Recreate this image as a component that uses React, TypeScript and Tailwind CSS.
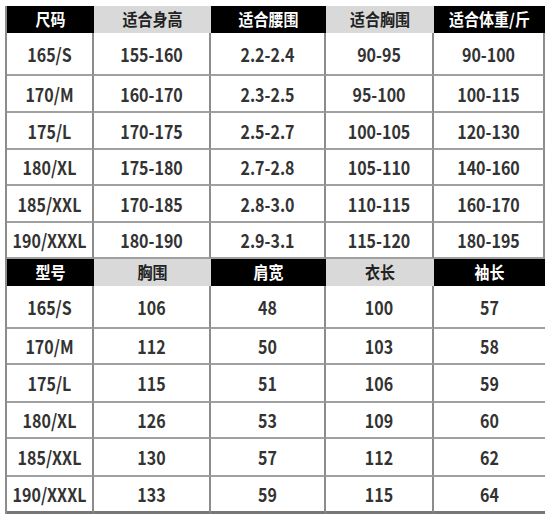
import React from 'react'

type Table = {
  head: string[]
  rows: string[][]
  rowHeights: number[]
}

const cols = 'grid grid-cols-[87px_117px_115px_108px_111px]'

const tables: Table[] = [
  {
    head: ['尺码', '适合身高', '适合腰围', '适合胸围', '适合体重/斤'],
    rows: [
      ['165/S', '155-160', '2.2-2.4', '90-95', '90-100'],
      ['170/M', '160-170', '2.3-2.5', '95-100', '100-115'],
      ['175/L', '170-175', '2.5-2.7', '100-105', '120-130'],
      ['180/XL', '175-180', '2.7-2.8', '105-110', '140-160'],
      ['185/XXL', '170-185', '2.8-3.0', '110-115', '160-170'],
      ['190/XXXL', '180-190', '2.9-3.1', '115-120', '180-195'],
    ],
    rowHeights: [43, 37, 37, 36, 37, 36],
  },
  {
    head: ['型号', '胸围', '肩宽', '衣长', '袖长'],
    rows: [
      ['165/S', '106', '48', '100', '57'],
      ['170/M', '112', '50', '103', '58'],
      ['175/L', '115', '51', '106', '59'],
      ['180/XL', '126', '53', '109', '60'],
      ['185/XXL', '130', '57', '112', '62'],
      ['190/XXXL', '133', '59', '115', '64'],
    ],
    rowHeights: [43, 36, 38, 36, 38, 37],
  },
]

function HeadRow({ cells }: { cells: string[] }) {
  return (
    <div className={`${cols} h-[27px]`}>
      {cells.map((c, i) => (
        <div
          key={i}
          className={
            i % 2 === 0
              ? 'flex items-center justify-center bg-black text-white text-[15px] font-bold'
              : 'flex items-center justify-center bg-[#d9d9d9] text-[#222] text-[15px] font-bold'
          }
        >
          <span className="inline-block scale-y-110">{c}</span>
        </div>
      ))}
    </div>
  )
}

function SizeTable({ table, last }: { table: Table; last: boolean }) {
  return (
    <div>
      <HeadRow cells={table.head} />
      {table.rows.map((row, r) => {
        const isLastRow = last && r === table.rows.length - 1
        return (
          <div key={r} className={cols} style={{ height: table.rowHeights[r] }}>
            {row.map((c, i) => (
              <div
                key={i}
                className={[
                  'flex items-center justify-center text-[16px] font-semibold text-[#333]',
                  isLastRow ? 'border-b-[3px] border-[#777]' : 'border-b-2 border-[#a0a0a0]',
                  i < 4 ? 'border-r-2 border-r-[#8c8c8c]' : last ? '' : 'border-r-2 border-r-[#8c8c8c]',
                ].join(' ')}
              >
                <span className="inline-block scale-y-115">{c}</span>
              </div>
            ))}
          </div>
        )
      })}
    </div>
  )
}

export default function App() {
  return (
    <div
      className="w-[557px] h-[520px] bg-white pl-[5px] pt-[6px]"
      style={{ fontFamily: '"Noto Sans CJK SC", "Noto Sans", sans-serif' }}
    >
      <div className="w-[540px] border-l-2 border-[#8c8c8c]">
        {tables.map((t, i) => (
          <SizeTable key={i} table={t} last={i === tables.length - 1} />
        ))}
      </div>
    </div>
  )
}
